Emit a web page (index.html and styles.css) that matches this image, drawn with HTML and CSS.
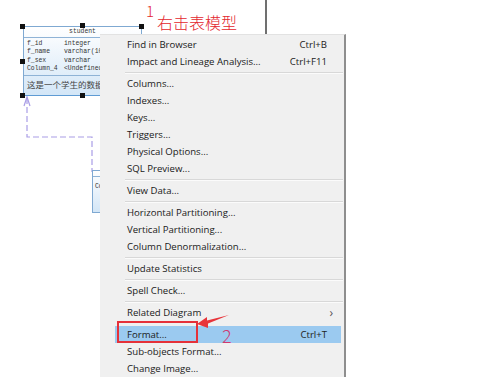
FILE: index.html
```html
<!DOCTYPE html>
<html>
<head>
	<meta charset="utf-8">
	<title>PowerDesigner - 表模型右键菜单</title>
	<link rel="stylesheet" href="styles.css">
</head>
<body>
	<div class="canvas">
		<div class="frame-line"></div>
		<div class="note note-1">1</div>
		<div class="note note-title">右击表模型</div>

		<svg class="link" width="100" height="180" viewBox="0 0 100 180">
			<path d="M27 98 V137 H92 V172" fill="none" stroke="#a99de6" stroke-width="1.2" stroke-dasharray="6 3"/>
			<path d="M24 106 L27 97 L30 106" fill="none" stroke="#a99de6" stroke-width="1.2"/>
		</svg>

		<div class="entity entity-student">
			<div class="entity-head">student</div>
			<div class="entity-cols">
				<span>f_id</span><span>integer</span>
				<span>f_name</span><span>varchar(10)</span>
				<span>f_sex</span><span>varchar</span>
				<span>Column_4</span><span>&lt;Undefined&gt;</span>
			</div>
			<div class="entity-comment">这是一个学生的数据表</div>
			<i class="handle h-tl"></i>
			<i class="handle h-tm"></i>
			<i class="handle h-tr"></i>
			<i class="handle h-ml"></i>
			<i class="handle h-bl"></i>
			<i class="handle h-bm"></i>
		</div>

		<div class="entity entity-small">
			<div class="entity-head"></div>
			<div class="entity-cols small-cols"><span>Column_1</span></div>
		</div>

		<div class="menu">
			<div class="menu-item"><span>Find in Browser</span><span class="key">Ctrl+B</span></div>
			<div class="menu-item"><span>Impact and Lineage Analysis...</span><span class="key">Ctrl+F11</span></div>
			<div class="menu-sep"></div>
			<div class="menu-item"><span>Columns...</span></div>
			<div class="menu-item"><span>Indexes...</span></div>
			<div class="menu-item"><span>Keys...</span></div>
			<div class="menu-item"><span>Triggers...</span></div>
			<div class="menu-item"><span>Physical Options...</span></div>
			<div class="menu-item"><span>SQL Preview...</span></div>
			<div class="menu-sep"></div>
			<div class="menu-item"><span>View Data...</span></div>
			<div class="menu-sep"></div>
			<div class="menu-item"><span>Horizontal Partitioning...</span></div>
			<div class="menu-item"><span>Vertical Partitioning...</span></div>
			<div class="menu-item"><span>Column Denormalization...</span></div>
			<div class="menu-sep"></div>
			<div class="menu-item"><span>Update Statistics</span></div>
			<div class="menu-sep"></div>
			<div class="menu-item"><span>Spell Check...</span></div>
			<div class="menu-sep"></div>
			<div class="menu-item"><span>Related Diagram</span><span class="arrow">&#8250;</span></div>
			<div class="menu-sep blank"></div>
			<div class="menu-item active"><span>Format...</span><span class="key">Ctrl+T</span></div>
			<div class="menu-item"><span>Sub-objects Format...</span></div>
			<div class="menu-item"><span>Change Image...</span></div>
		</div>

		<div class="mark-box"></div>
		<svg class="mark-arrow" width="40" height="20" viewBox="0 0 40 20">
			<polygon points="1,10 11,3 11,6.5 33,1 12,9.5 12,14" fill="#e8343a"/>
		</svg>
		<div class="note note-2">2</div>
	</div>
</body>
</html>
```

FILE: styles.css
```css
html, body
{
	margin: 0;
	padding: 0;
	background: #ffffff;
}
.canvas
{
	position: relative;
	width: 490px;
	height: 377px;
	overflow: hidden;
	font-family: "Open Sans", "Noto Sans", sans-serif;
}
.frame-line
{
	position: absolute;
	left: 265px;
	top: 0;
	width: 2px;
	height: 35px;
	background: #707070;
}
.note
{
	position: absolute;
	color: #e3262d;
	font-family: "Noto Sans CJK SC", sans-serif;
	font-weight: 300;
	line-height: 1;
}
.note-1
{
	left: 146px;
	top: 3px;
	font-size: 15px;
}
.note-title
{
	left: 157px;
	top: 14px;
	font-size: 16px;
}
.note-2
{
	left: 222px;
	top: 326px;
	font-size: 18px;
	color: #cf3a70;
}
.link
{
	position: absolute;
	left: 0;
	top: 0;
}

/* entities on the diagram */
.entity
{
	position: absolute;
	box-sizing: border-box;
	border: 1px solid #7fa9d2;
	background: linear-gradient(#ffffff, #d3e6f7);
	font-family: "Liberation Mono", monospace;
	font-size: 6.4px;
	color: #333333;
}
.entity-student
{
	left: 23px;
	top: 26px;
	width: 119px;
	height: 70px;
	border-bottom-color: #5f9bd4;
}
.entity-head
{
	height: 10px;
	line-height: 10px;
	text-align: center;
	border-bottom: 1px solid #8fb3d6;
}
.entity-cols
{
	display: grid;
	grid-template-columns: 37px 1fr;
	padding: 2px 0 2px 3px;
	line-height: 8.3px;
	border-bottom: 1px solid #8fb3d6;
	white-space: nowrap;
	overflow: hidden;
}
.entity-comment
{
	padding: 2px 0 0 3px;
	font-family: "Noto Sans CJK SC", sans-serif;
	font-size: 8.5px;
	color: #444444;
	white-space: nowrap;
	overflow: hidden;
}
.entity-small
{
	left: 92px;
	top: 170px;
	width: 40px;
	height: 43px;
}
.entity-small .entity-head
{
	height: 5px;
}
.small-cols
{
	display: block;
	border-bottom: none;
	padding-top: 6px;
	padding-left: 2px;
}
.handle
{
	position: absolute;
	width: 5px;
	height: 5px;
	background: #111111;
}
.h-tl { left: -4px; top: -3px; }
.h-tm { left: 56px; top: -4px; }
.h-tr { left: 115px; top: -3px; }
.h-ml { left: -4px; top: 32px; }
.h-bl { left: -4px; top: 66px; }
.h-bm { left: 56px; top: 66px; }

/* context menu */
.menu
{
	position: absolute;
	left: 100px;
	top: 34px;
	width: 244px;
	height: 360px;
	padding-top: 1px;
	background: #f0f0f0;
	border-top: 1px solid #e2e2e2;
	border-right: 2px solid #8e8e8e;
	font-size: 9.6px;
	color: #1a1a1a;
}
.menu-item
{
	display: flex;
	align-items: center;
	justify-content: space-between;
	height: 17px;
	margin: 0 3px 0 15px;
	padding: 0 14px 0 12px;
	white-space: nowrap;
}
.menu-item.active
{
	background: #9bcaf0;
}
.key
{
	color: #222222;
}
.arrow
{
	font-size: 12px;
	color: #555555;
	margin-right: -6px;
}
.menu-sep
{
	height: 1px;
	margin: 2px 1px 1px 25px;
	background: #d8d8d8;
	border-bottom: 1px solid #fbfbfb;
}
.menu-sep.blank
{
	background: transparent;
	border-bottom-color: transparent;
}

/* red annotations */
.mark-box
{
	position: absolute;
	left: 117px;
	top: 321px;
	width: 77px;
	height: 18px;
	border: 2px solid #e5313a;
}
.mark-arrow
{
	position: absolute;
	left: 196px;
	top: 314px;
}
```
